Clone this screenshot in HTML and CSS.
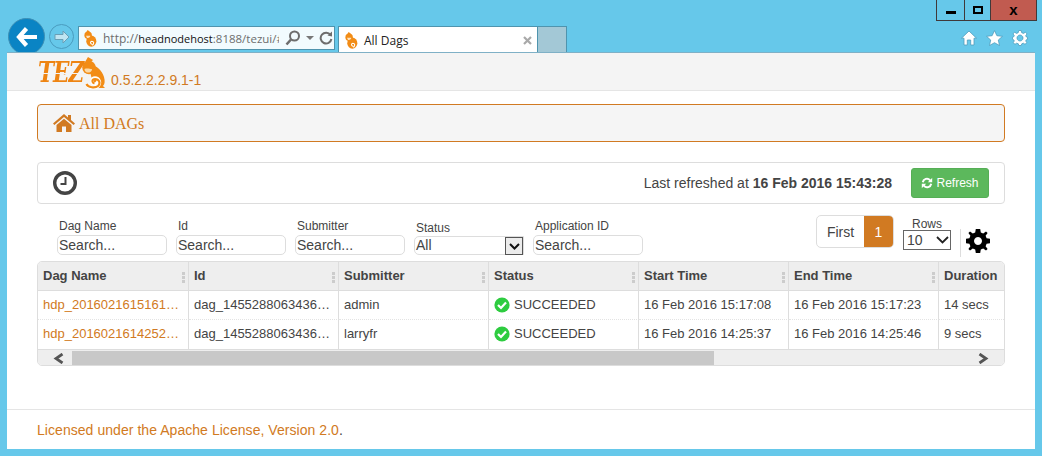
FILE: index.html
```html
<!DOCTYPE html>
<html lang="en">
<head>
  <meta charset="UTF-8">
  <title>All Dags</title>
  <link rel="stylesheet" href="styles.css">
</head>
<body>

<div class="browser">
  <div class="nav-left">
    <div class="back-btn">
      <svg width="22" height="20" viewBox="0 0 22 20"><path d="M10.5 1.5 L3 10 L10.5 18.5 M4 10 H21" fill="none" stroke="#fff" stroke-width="4.2"/></svg>
    </div>
    <div class="forward-btn">
      <svg width="16" height="14" viewBox="0 0 16 14"><path d="M9 1 L15 7 L9 13 V9.5 H1 V4.5 H9 Z" fill="#bfe5f2" stroke="#6a9fb5"/></svg>
    </div>
    <div class="address">
      <svg class="favicon" width="13" height="17" viewBox="0 0 23 32"><path d="M3 5 L6 0 L10 3 L5 8 Z" fill="#f28c16"/><circle cx="7" cy="10" r="7" fill="#f28c16"/><ellipse cx="13" cy="21" rx="9.5" ry="10.5" fill="#f28c16"/><path d="M3 11 H11 C11 14 8 16 5 15 Z" fill="#ffe2bb"/><path d="M15 27 C11 27 10 22 14 21 C18 21 19 26 15 29" fill="none" stroke="#fff" stroke-width="2"/></svg>
      <span class="url"><span class="url-dim">http://</span>headnodehost<span class="url-port">:8188/tezui/#</span></span>
      <svg class="addr-icon" width="16" height="16" viewBox="0 0 16 16"><circle cx="9.5" cy="6" r="4.5" fill="none" stroke="#6d6d6d" stroke-width="2"/><path d="M6 9.5 L1.5 14.5" stroke="#6d6d6d" stroke-width="2.6"/></svg>
      <span class="caret"></span>
      <svg class="addr-icon" width="14" height="14" viewBox="0 0 14 14"><path d="M11.5 4 A5.4 5.4 0 1 0 12.4 8" fill="none" stroke="#6d6d6d" stroke-width="2"/><path d="M8.5 4.5 L13 5.5 L13 0.5 Z" fill="#6d6d6d"/></svg>
    </div>
    <div class="tab">
      <svg class="favicon" width="13" height="17" viewBox="0 0 23 32"><path d="M3 5 L6 0 L10 3 L5 8 Z" fill="#f28c16"/><circle cx="7" cy="10" r="7" fill="#f28c16"/><ellipse cx="13" cy="21" rx="9.5" ry="10.5" fill="#f28c16"/><path d="M3 11 H11 C11 14 8 16 5 15 Z" fill="#ffe2bb"/><path d="M15 27 C11 27 10 22 14 21 C18 21 19 26 15 29" fill="none" stroke="#fff" stroke-width="2"/></svg>
      <span class="tab-title">All Dags</span>
      <svg width="9" height="9" viewBox="0 0 9 9"><path d="M1 1 L8 8 M8 1 L1 8" stroke="#a9a9a9" stroke-width="2.2"/></svg>
    </div>
    <div class="new-tab"></div>
  </div>
  <div class="nav-right">
    <div class="win-controls">
      <div class="win-btn win-min"><span></span></div>
      <div class="win-btn win-max"><span></span></div>
      <div class="win-btn win-close">x</div>
    </div>
    <div class="chrome-icons">
      <svg width="16" height="16" viewBox="0 0 16 16"><path d="M8 1 L15.5 8.2 H13 V15 H9.7 V10 H6.3 V15 H3 V8.2 H0.5 Z" fill="#fff" stroke="#4f9dbd" stroke-width=".8"/></svg>
      <svg width="17" height="16" viewBox="0 0 17 16"><path d="M8.5 .6 L10.9 5.7 L16.5 6.3 L12.3 10 L13.5 15.5 L8.5 12.7 L3.5 15.5 L4.7 10 L.5 6.3 L6.1 5.7 Z" fill="#fff" stroke="#4f9dbd" stroke-width=".8"/></svg>
      <svg width="16" height="16" viewBox="0 0 16 16"><path d="M6.8 .5 H9.2 L9.7 2.7 L11.5 3.4 L13.4 2.2 L15 3.9 L13.7 5.8 L14.4 7 L15.5 7.2 V9.3 L14.3 9.8 L13.7 11 L14.9 12.6 L13 14.3 L11.3 13.2 L9.8 13.8 L9.2 15.5 H6.8 L6.3 13.8 L4.7 13.2 L3 14.3 L1.1 12.6 L2.3 11 L1.7 9.8 L.5 9.3 V7.2 L1.7 6.8 L2.3 5.7 L1 3.9 L2.6 2.2 L4.5 3.4 L6.2 2.7 Z M8 5 A3 3 0 1 0 8.01 5 Z" fill="#fff" fill-rule="evenodd" stroke="#4f9dbd" stroke-width=".8"/></svg>
    </div>
  </div>
</div>

<div class="page">
  <div class="page-header">
    <div class="logo">
      <span class="logo-text">TEZ</span>
      <svg class="logo-monkey" width="23" height="32" viewBox="0 0 23 32">
        <path d="M3 5 L6 0 L11 3 L6 8 Z" fill="#f28c16"/>
        <circle cx="7" cy="10.5" r="6.8" fill="#f28c16"/>
        <path d="M9 8 C14 8 20 13 22 20 C23 24 23 27 21 29 L23 31 H15 L11 26 L8 15 Z" fill="#f28c16"/>
        <path d="M2.5 12 C5 11 8 12 10 12 C10 15 7 16 5 15.5 C3.5 15 2.5 14 2.5 12 Z" fill="#fbd9a8"/>
        <path d="M5 27 C6 31 13 32 16 29 C19 26 17 21 13 21 C9.5 21 9 26 12.5 27 C14 27 15 25.5 14 24.5" fill="none" stroke="#fff" stroke-width="3.4"/>
        <path d="M4.5 27 C6 30.5 13 31.5 16 29 C19 26 17 22 13 22 C10 22 9.5 25.5 12.5 26.5" fill="none" stroke="#f28c16" stroke-width="2.2"/>
      </svg>
      <span class="version">0.5.2.2.2.9.1-1</span>
    </div>
  </div>

  <div class="content">
    <div class="breadcrumb">
      <svg width="22" height="18" viewBox="0 0 22 18"><path d="M11 0 L15 3.4 V1 H18 V6 L22 9.6 L20.6 11 L11 3 L1.4 11 L0 9.6 Z M3.5 11 L11 4.8 L18.5 11 V18 H13 V12.5 H9 V18 H3.5 Z" fill="#d17a22"/></svg>
      <span class="breadcrumb-text">All DAGs</span>
    </div>

    <div class="refresh-bar">
      <svg width="24" height="24" viewBox="0 0 24 24"><circle cx="12" cy="12" r="10.3" fill="none" stroke="#444" stroke-width="3.4"/><path d="M12.5 6 V13 H7.5" fill="none" stroke="#444" stroke-width="2"/></svg>
      <span class="refresh-time">Last refreshed at <b>16 Feb 2016 15:43:28</b></span>
      <button class="refresh-btn">
        <svg width="12" height="12" viewBox="0 0 12 12"><path d="M.8 5 A5.2 5.2 0 0 1 9.7 2.4 L11.2 .8 V5.2 H6.8 L8.3 3.7 A3.2 3.2 0 0 0 2.8 5.4 Z M11.2 7 A5.2 5.2 0 0 1 2.3 9.6 L.8 11.2 V6.8 H5.2 L3.7 8.3 A3.2 3.2 0 0 0 9.2 6.6 Z" fill="#fff"/></svg>
        Refresh
      </button>
    </div>

    <div class="controls">
      <div class="filters">
        <label class="filter"><span class="filter-label">Dag Name</span><input type="text" placeholder="Search..."></label>
        <label class="filter"><span class="filter-label">Id</span><input type="text" placeholder="Search..."></label>
        <label class="filter"><span class="filter-label">Submitter</span><input type="text" placeholder="Search..."></label>
        <div class="filter filter-status"><span class="filter-label">Status</span>
          <div class="fake-select">All
            <span class="fake-arrow"><svg width="11" height="7" viewBox="0 0 11 7"><path d="M1 1 L5.5 5.5 L10 1" fill="none" stroke="#111" stroke-width="2"/></svg></span>
          </div>
        </div>
        <label class="filter"><span class="filter-label">Application ID</span><input type="text" placeholder="Search..."></label>
      </div>
      <div class="pager">
        <div class="pages"><span class="page-first">First</span><span class="page-num">1</span></div>
        <div class="rows">Rows
          <div class="rows-select">10<svg width="13" height="8" viewBox="0 0 13 8"><path d="M1 1 L6.5 6.5 L12 1" fill="none" stroke="#222" stroke-width="1.8"/></svg></div>
        </div>
        <div class="settings">
          <svg width="24" height="24" viewBox="0 0 24 24"><path d="M9.8 0 H14.2 L14.8 3.4 L17.2 4.4 L20 2.4 L21.6 4 L19.6 6.8 L20.6 9.2 L24 9.8 V14.2 L20.6 14.8 L19.6 17.2 L21.6 20 L20 21.6 L17.2 19.6 L14.8 20.6 L14.2 24 H9.8 L9.2 20.6 L6.8 19.6 L4 21.6 L2.4 20 L4.4 17.2 L3.4 14.8 L0 14.2 V9.8 L3.4 9.2 L4.4 6.8 L2.4 4 L4 2.4 L6.8 4.4 L9.2 3.4 Z M12 8 A4 4 0 1 0 12.01 8 Z" fill="#000" fill-rule="evenodd"/></svg>
        </div>
      </div>
    </div>

    <div class="grid">
      <table>
        <thead>
          <tr>
            <th class="col-first">Dag Name<i class="grip"></i></th>
            <th>Id<i class="grip"></i></th>
            <th>Submitter<i class="grip"></i></th>
            <th>Status<i class="grip"></i></th>
            <th>Start Time<i class="grip"></i></th>
            <th>End Time<i class="grip"></i></th>
            <th class="col-last">Duration</th>
          </tr>
        </thead>
        <tbody>
          <tr>
            <td><a href="#">hdp_2016021615161…</a></td>
            <td>dag_1455288063436…</td>
            <td>admin</td>
            <td><span class="status"><svg width="16" height="16" viewBox="0 0 16 16"><circle cx="8" cy="8" r="7.6" fill="#2ecc40"/><path d="M4 8 L7 11 L12 5.6" fill="none" stroke="#fff" stroke-width="2.2"/></svg>SUCCEEDED</span></td>
            <td>16 Feb 2016 15:17:08</td>
            <td>16 Feb 2016 15:17:23</td>
            <td>14 secs</td>
          </tr>
          <tr>
            <td><a href="#">hdp_2016021614252…</a></td>
            <td>dag_1455288063436…</td>
            <td>larryfr</td>
            <td><span class="status"><svg width="16" height="16" viewBox="0 0 16 16"><circle cx="8" cy="8" r="7.6" fill="#2ecc40"/><path d="M4 8 L7 11 L12 5.6" fill="none" stroke="#fff" stroke-width="2.2"/></svg>SUCCEEDED</span></td>
            <td>16 Feb 2016 14:25:37</td>
            <td>16 Feb 2016 14:25:46</td>
            <td>9 secs</td>
          </tr>
        </tbody>
      </table>
      <div class="scrollbar">
        <svg width="12" height="11" viewBox="0 0 12 11"><path d="M9.5 1 L3 5.5 L9.5 10" fill="none" stroke="#555" stroke-width="2.8"/></svg>
        <div class="scroll-track"><div class="scroll-thumb"></div></div>
        <svg width="12" height="11" viewBox="0 0 12 11"><path d="M2.5 1 L9 5.5 L2.5 10" fill="none" stroke="#555" stroke-width="2.8"/></svg>
      </div>
    </div>
  </div>

  <div class="page-footer">
    <a href="#">Licensed under the Apache License, Version 2.0</a>.
  </div>
</div>

</body>
</html>
```

FILE: styles.css
```css
html, body { height: 100%; }
body { margin: 0; background: #66c8ea; font-family: "Liberation Sans", Arial, sans-serif; font-size: 14px; color: #444; overflow: hidden; }
a { color: #d17a22; text-decoration: none; }

/* browser chrome */
.browser { height: 53px; display: flex; justify-content: space-between; }
.nav-left { display: flex; align-items: flex-end; padding-left: 8px; }
.back-btn { width: 37px; height: 37px; margin-bottom: -2px; box-sizing: border-box; border: 1px solid #3d8fb5; border-radius: 50%; background: #0a84c4; display: flex; align-items: center; justify-content: center; flex: none; }
.forward-btn { width: 25px; height: 25px; margin: 0 0 4px 4px; box-sizing: border-box; border: 1px solid #4a9cbf; border-radius: 50%; display: flex; align-items: center; justify-content: center; flex: none; }
.address { width: 257px; height: 24px; margin: 0 0 3px 4px; box-sizing: border-box; border: 1px solid #4f94ae; background: #f2fbfe; display: flex; align-items: center; padding: 0 3px 0 5px; flex: none; }
.favicon { flex: none; }
.url { width: 176px; margin: 0 6px 0 6px; overflow: hidden; white-space: nowrap; font-family: "Open Sans", sans-serif; font-size: 11px; color: #111; flex: none; }
.url-dim { color: #6d6d6d; font-size: 12px; }
.url-port { color: #6d6d6d; font-size: 11.5px; }
.addr-icon { flex: none; }
.caret { width: 0; height: 0; margin: 0 5px 0 5px; border-left: 4px solid transparent; border-right: 4px solid transparent; border-top: 4px solid #777; flex: none; }
.tab { width: 200px; height: 27px; margin-left: 3px; box-sizing: border-box; border: 1px solid #4f94ae; border-bottom: 0; background: #fff; display: flex; align-items: center; padding: 0 5px 0 6px; flex: none; }
.tab-title { flex: 1; margin-left: 6px; font-family: "Open Sans", sans-serif; font-size: 12px; color: #222; }
.new-tab { width: 29px; height: 27px; background: #a3c8d6; border: 1px solid #4f94ae; border-width: 1px 1px 0 0; box-sizing: border-box; flex: none; }

.nav-right { display: flex; flex-direction: column; align-items: flex-end; padding-right: 5px; }
.win-controls { display: flex; height: 20px; border: 1px solid #40393a; border-top: 0; }
.win-btn { display: flex; align-items: center; justify-content: center; height: 20px; }
.win-min { width: 27px; border-right: 1px solid #40393a; }
.win-min span { width: 10px; height: 3px; background: #000; margin-top: 4px; }
.win-max { width: 25px; border-right: 1px solid #40393a; }
.win-max span { width: 6px; height: 4px; border: 2px solid #000; margin-top: -1px; }
.win-close { width: 45px; background: #c15b50; font: bold 15px/16px "Liberation Sans", sans-serif; color: #000; }
.chrome-icons { display: flex; gap: 9px; margin: 9px 9px 0 0; }

/* page */
.page { height: 396px; margin: 0 7px; background: #fff; display: flex; flex-direction: column; box-shadow: 0 -1px 0 #7fb0c6; position: relative; }
.page-header { height: 37px; background: #f4f4f4; border-bottom: 1px solid #e5e5e5; padding-left: 31px; }
.logo { display: flex; align-items: flex-start; height: 37px; }
.logo-text { font: italic bold 24px/24px "DejaVu Serif Condensed", "DejaVu Serif", serif; letter-spacing: -1px; width: 44px; padding-right: 3px; margin: 7px -3px 0 0; transform: scaleY(1.2); color: transparent; background: linear-gradient(#ee8412 0 13px, #f4f4f4 13px 14px, #ee8412 14px); -webkit-background-clip: text; background-clip: text; }
.logo-monkey { margin: 4px 0 0 0; flex: none; }
.version { margin: 19px 0 0 6px; color: #d17a22; font-size: 14px; line-height: 16px; }

.content { flex: 1; padding: 13px 30px 0; }
.breadcrumb { height: 36px; border: 1px solid #d17a22; border-radius: 4px; background: #f5f5f5; display: flex; align-items: center; padding-left: 15px; gap: 4px; font-family: "Liberation Serif", serif; font-size: 16px; color: #d17a22; }
.breadcrumb-text { padding-top: 2px; }
.refresh-bar { height: 40px; margin-top: 20px; border: 1px solid #ddd; border-radius: 4px; display: flex; align-items: center; padding: 0 15px; }
.refresh-time { margin-left: auto; margin-right: 19px; }
.refresh-btn { width: 78px; height: 30px; padding: 0; border: 1px solid #56ae56; border-radius: 3px; background: #5cb85c; color: #fff; font: 12px "Liberation Sans", sans-serif; display: flex; align-items: center; justify-content: center; gap: 3px; }

.controls { display: flex; justify-content: space-between; height: 47px; margin-top: 10px; }
.filters { display: flex; padding: 5px 0 0 20px; gap: 9px; }
.filter { display: flex; flex-direction: column; width: 110px; font-size: 12px; line-height: 15px; }
.filter-label { padding: 0 0 1px 2px; }
.filter input { width: 100%; height: 20px; box-sizing: border-box; padding: 0 1px; margin: 0; border: 1px solid #ddd; border-radius: 5px; font: 14px "Liberation Sans", sans-serif; color: #444; outline: 0; }
.filter input::placeholder { color: #444; opacity: 1; }
.filter-status { padding-top: 2px; }
.filter-status .filter-label { padding-bottom: 0; }
.fake-select { height: 19px; box-sizing: border-box; border: 1px solid #ddd; border-radius: 5px 0 0 5px; font-size: 14px; line-height: 17px; padding-left: 1px; position: relative; }
.fake-arrow { position: absolute; right: 0; top: 0; width: 18px; height: 18px; box-sizing: border-box; border: 1px solid #555; background: #ececec; display: flex; align-items: center; justify-content: center; }

.pager { display: flex; align-items: flex-start; padding-right: 15px; }
.pages { display: flex; height: 33px; margin: 1px 0 0; border: 1px solid #ddd; border-radius: 5px; box-sizing: border-box; overflow: hidden; }
.page-first { width: 47px; display: flex; align-items: center; justify-content: center; font-size: 14px; }
.page-num { width: 29px; background: #d17a22; color: #fff; display: flex; align-items: center; justify-content: center; }
.rows { width: 48px; margin: 4px 0 0 9px; font-size: 12px; line-height: 12px; text-align: center; }
.rows-select { height: 20px; box-sizing: border-box; border: 1px solid #666; display: flex; align-items: center; justify-content: space-between; padding: 0 1px 0 3px; font-size: 14px; }
.settings { margin: 15px 0 0 9px; height: 28px; border-left: 1px solid #ddd; padding: 0 0 0 5px; }

.grid { height: 105px; box-sizing: border-box; border: 1px solid #ddd; border-radius: 5px; overflow: hidden; }
.grid table { width: 966px; border-collapse: separate; border-spacing: 0; table-layout: fixed; font-size: 13px; }
.grid th { height: 29px; padding: 0 5px 1px; box-sizing: border-box; background: #eee; border-right: 1px solid #ddd; border-bottom: 1px solid #ddd; text-align: left; position: relative; width: 150px; }
.grid th.col-first { width: 151px; }
.grid th.col-last { width: auto; border-right: 0; }
.grid td { height: 29px; padding: 0 5px 1px; box-sizing: border-box; border-right: 1px solid #ddd; border-bottom: 1px dotted #e3e3e3; white-space: nowrap; }
.grid td:last-child { border-right: 0; }
.grid tr:last-child td { border-bottom: 0; padding-bottom: 2px; }
.grip { position: absolute; right: 3px; top: 10px; width: 3px; height: 11px; background: repeating-linear-gradient(#ccc 0 3px, transparent 3px 4px); }
.status { display: flex; align-items: center; gap: 4px; }
.scrollbar { height: 17px; box-sizing: border-box; background: #eee; border-top: 1px solid #ddd; display: flex; align-items: center; padding: 0 15px; }
.scroll-track { flex: 1; margin: 0 6px 0 7px; height: 15px; }
.scroll-thumb { width: 642px; height: 15px; background: #c8c8c8; }

.page-footer { height: 39px; border-top: 1px solid #e5e5e5; padding-left: 30px; line-height: 41px; letter-spacing: .05px; }
```
